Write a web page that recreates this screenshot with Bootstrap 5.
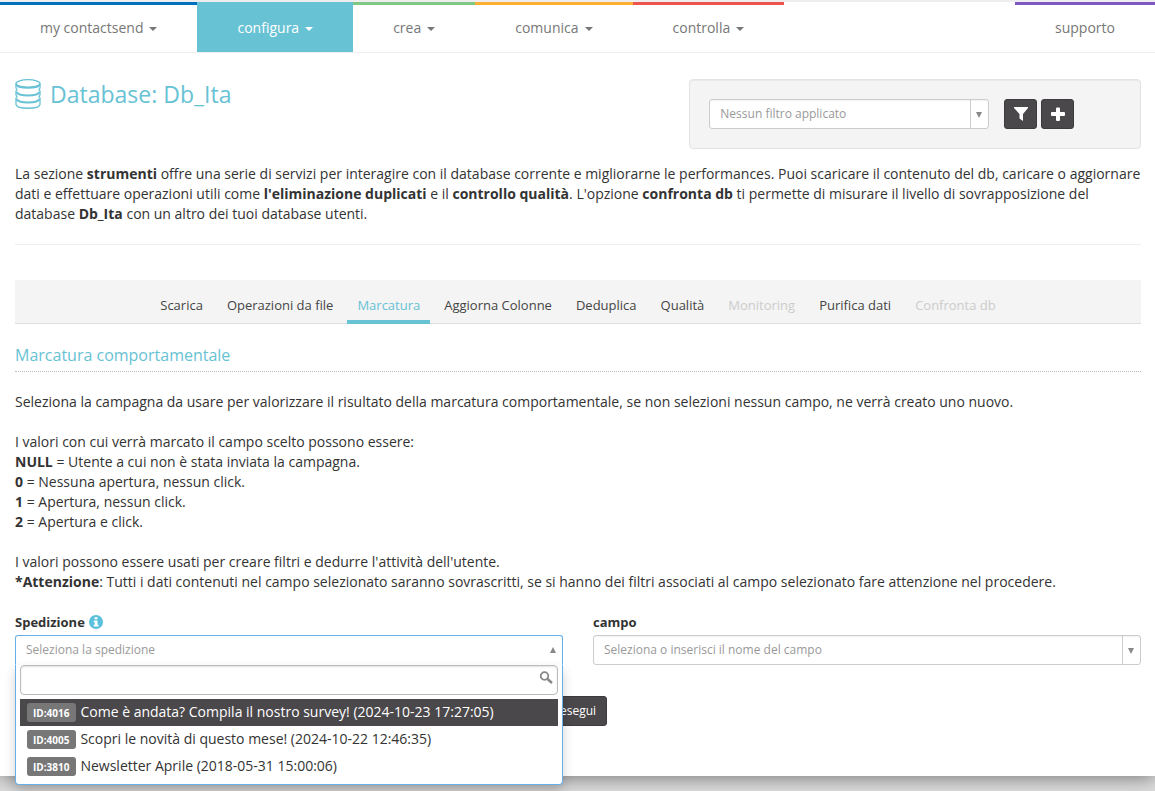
<!DOCTYPE html>
<html lang="it">
<head>
<meta charset="utf-8">
<meta name="viewport" content="width=device-width, initial-scale=1">
<title>Database: Db_Ita</title>
<link href="https://cdn.jsdelivr.net/npm/bootstrap@5.3.0/dist/css/bootstrap.min.css" rel="stylesheet">
<style>
  :root { --brand: #67c2d4; --ink: #4a484b; }
  body { font: 14px/20px "Open Sans", sans-serif; color: #333; background: #ddd; }
  .sheet { background: #fff; border-top: 2px solid #eee; padding-bottom: 50px; box-shadow: 0 0 20px rgba(0,0,0,.55); }

  .mainbar { border-bottom: 1px solid #eee; }
  .mainbar .nav-link { border-top: 3px solid var(--line); border-radius: 0; padding: 13px 40px 14px; color: #777; }
  .mainbar .nav-link.active { background: var(--brand); color: #fff; }
  .mainbar .dropdown-toggle::after { border-width: 4px 4px 0; margin-left: 6px; vertical-align: 2px; }
  .line-blue { --line: #0072bc; }
  .line-aqua { --line: var(--brand); }
  .line-green { --line: #81c784; }
  .line-yellow { --line: #fbb034; }
  .line-red { --line: #ef5350; }
  .line-violet { --line: #7e57c2; }

  .sheet-body { padding: 26px 14px 0 15px; }
  .sheet-body .row { --bs-gutter-x: 30px; }
  .page-title { font-size: 23px; line-height: 30px; color: var(--brand); gap: 9px; }
  .page-head { margin-bottom: 15px; }
  .intro { margin: 0 -4px 0 0; }
  .filter-well { background: #f4f4f4; border: 1px solid #e3e3e3; border-radius: 4px; padding: 19px; box-shadow: inset 0 1px 1px rgba(0,0,0,.05); }
  .filter-choice { width: 68%; margin-right: 15px; }

  .choice { height: 30px; font-size: 12px; line-height: 18px; color: #999; padding: 5px 28px 5px 10px; border: 1px solid #ccc; border-radius: 3px;
    background: #fff url("data:image/svg+xml,%3Csvg xmlns='http://www.w3.org/2000/svg' width='18' height='28'%3E%3Cpath d='M0 0h1v28H0z' fill='%23ccc'/%3E%3Cpath d='M6 12h6l-3 6z' fill='%23888'/%3E%3C/svg%3E") no-repeat right center / 18px 28px;
    box-shadow: inset 0 1px 1px rgba(0,0,0,.05); }
  .choice-open { border-color: #66afe9; border-bottom-color: #fff; border-radius: 3px 3px 0 0; box-shadow: none;
    background-image: url("data:image/svg+xml,%3Csvg xmlns='http://www.w3.org/2000/svg' width='18' height='28'%3E%3Cpath d='M6 17h6l-3 -6z' fill='%23888'/%3E%3C/svg%3E"); }
  .btn-ink { --bs-btn-bg: var(--ink); --bs-btn-color: #fff; --bs-btn-border-color: #3d3b3e; --bs-btn-hover-bg: #3d3b3e; --bs-btn-hover-color: #fff;
    --bs-btn-border-radius: 3px; --bs-btn-font-size: 12px; --bs-btn-line-height: 18px; --bs-btn-padding-y: 5px; --bs-btn-padding-x: 10px; line-height: 18px; }
  .btn-glyph { width: 33px; height: 30px; --bs-btn-padding-x: 0px; --bs-btn-padding-y: 0px; }

  .rule { height: 1px; background: #eee; margin: 20px 0 35px; }
  .toolbar-tabs { background: #f4f4f4; border-bottom: 1px solid #ddd; padding-top: 10px; gap: 4px; font-size: 13px; }
  .toolbar-tabs .nav-link { color: #444; padding: 5px 10px; border-bottom: 4px solid transparent; margin-bottom: -1px; }
  .toolbar-tabs .nav-link.active { color: var(--brand); border-color: var(--brand); }
  .toolbar-tabs .nav-link.disabled { color: #ccc; }
  .section-title { font-size: 16px; line-height: 20px; color: var(--brand); border-bottom: 1px dotted #bbb; padding: 21px 0 6px; margin-bottom: 20px; }
  .field-label { font-size: 13px; font-weight: 700; margin-bottom: 3px; }

  .choice-panel { top: 100%; z-index: 5; background: #fff; border: 1px solid #66afe9; border-top: 0; border-radius: 0 0 4px 4px; padding: 0 4px 4px; box-shadow: 0 6px 12px rgba(0,0,0,.18); }
  .search-box { height: 30px; font-size: 12px; border: 1px solid #bbb; border-radius: 4px; padding: 4px 28px 4px 6px; margin-bottom: 4px; box-shadow: inset 0 1px 2px rgba(0,0,0,.12); }
  .search-glyph { top: 6px; right: 5px; }
  .result { padding: 3px 7px 4px; display: flex; align-items: center; gap: 4px; }
  .result.current { background: var(--ink); color: #fff; }
  .id-tag { background: #777; color: #fff; font-size: 10px; font-weight: 700; line-height: 12px; padding: 4px 7px 3px 6px; border-radius: 3px; }
  .submit-row { margin-top: 31px; }
</style>
</head>
<body class="min-vh-100">
<div class="sheet">
  <nav class="mainbar nav">
    <a class="nav-link dropdown-toggle line-blue" href="#">my contactsend</a>
    <a class="nav-link dropdown-toggle active line-aqua" href="#">configura</a>
    <a class="nav-link dropdown-toggle line-green" href="#">crea</a>
    <a class="nav-link dropdown-toggle line-yellow" href="#">comunica</a>
    <a class="nav-link dropdown-toggle line-red" href="#">controlla</a>
    <a class="nav-link line-violet ms-auto" href="#">supporto</a>
  </nav>

  <main class="sheet-body">
    <div class="row page-head">
      <div class="col-7">
        <h1 class="page-title d-flex align-items-center fw-normal m-0">
          <svg width="26" height="30" viewBox="0 0 26 30" fill="none" stroke="#67c2d4" stroke-width="1.3" aria-hidden="true">
            <ellipse cx="13" cy="4.500" rx="12" ry="3.800"/>
            <path d="M1 4.500V9l1 1.500L1 12v4l1 1.500L1 19v6.500c1 5 23 5 24 0V19l-1-1.500 1-1.500v-4l-1-1.500L25 9V4.500"/>
            <path d="M1.500 6c2 3.600 21 3.600 23 0M1.500 13c2 4.600 21 4.600 23 0M1.500 20c2 4.600 21 4.600 23 0" stroke-width="2"/>
          </svg>
          Database: Db_Ita
        </h1>
      </div>
      <div class="col-5">
        <form class="filter-well d-flex">
          <select class="form-select choice filter-choice" aria-label="Filtro"><option>Nessun filtro applicato</option></select>
          <button type="button" class="btn btn-ink btn-glyph me-1 d-flex align-items-center justify-content-center" aria-label="Filtra">
            <svg width="14" height="14" viewBox="0 0 14 14" fill="#fff"><path d="M0 0h14v1L9 7v7L5.500 11.500V7L0 1z"/></svg>
          </button>
          <button type="button" class="btn btn-ink btn-glyph d-flex align-items-center justify-content-center" aria-label="Aggiungi">
            <svg width="14" height="14" viewBox="0 0 14 14" fill="#fff"><path d="M5 1.500a1 1 0 0 1 1-1h2a1 1 0 0 1 1 1V5h4a1 1 0 0 1 1 1v2a1 1 0 0 1-1 1H9v4a1 1 0 0 1-1 1H6a1 1 0 0 1-1-1V9H1a1 1 0 0 1-1-1V6a1 1 0 0 1 1-1h4z"/></svg>
          </button>
        </form>
      </div>
    </div>

    <p class="intro">La sezione <b>strumenti</b> offre una serie di servizi per interagire con il database corrente e migliorarne le performances. Puoi scaricare il contenuto del db, caricare o aggiornare dati e effettuare operazioni utili come <b>l'eliminazione duplicati</b> e il <b>controllo qualità</b>. L'opzione <b>confronta db</b> ti permette di misurare il livello di sovrapposizione del database <b>Db_Ita</b> con un altro dei tuoi database utenti.</p>
    <div class="rule"></div>

    <nav class="toolbar-tabs nav justify-content-center">
      <a class="nav-link" href="#">Scarica</a>
      <a class="nav-link" href="#">Operazioni da file</a>
      <a class="nav-link active" href="#">Marcatura</a>
      <a class="nav-link" href="#">Aggiorna Colonne</a>
      <a class="nav-link" href="#">Deduplica</a>
      <a class="nav-link" href="#">Qualità</a>
      <a class="nav-link disabled" href="#">Monitoring</a>
      <a class="nav-link" href="#">Purifica dati</a>
      <a class="nav-link disabled" href="#">Confronta db</a>
    </nav>

    <h2 class="section-title fw-normal">Marcatura comportamentale</h2>
    <p>Seleziona la campagna da usare per valorizzare il risultato della marcatura comportamentale, se non selezioni nessun campo, ne verrà creato uno nuovo.<br><br>
      I valori con cui verrà marcato il campo scelto possono essere:<br>
      <b>NULL</b> = Utente a cui non è stata inviata la campagna.<br>
      <b>0</b> = Nessuna apertura, nessun click.<br>
      <b>1</b> = Apertura, nessun click.<br>
      <b>2</b> = Apertura e click.<br><br>
      I valori possono essere usati per creare filtri e dedurre l'attività dell'utente.<br>
      <b>*Attenzione</b>: Tutti i dati contenuti nel campo selezionato saranno sovrascritti, se si hanno dei filtri associati al campo selezionato fare attenzione nel procedere.</p>

    <form class="pt-1">
      <div class="row">
        <div class="col-6">
          <label class="field-label d-flex align-items-center gap-1" for="spedizione">Spedizione
            <svg width="14" height="14" viewBox="0 0 14 14" aria-hidden="true"><circle cx="7" cy="7" r="7" fill="#5bc0de"/><path d="M5.500 2.200h3v2h-3zM4.800 5.500h3.700v4.300h1v1.700H4.700V9.800h1V7.200h-.9z" fill="#fff"/></svg>
          </label>
          <div class="position-relative">
            <select id="spedizione" class="form-select choice choice-open"><option>Seleziona la spedizione</option></select>
            <div class="choice-panel position-absolute start-0 end-0">
              <div class="position-relative">
                <input type="search" class="form-control search-box" aria-label="Cerca spedizione">
                <svg class="search-glyph position-absolute" width="14" height="14" viewBox="0 0 14 14" fill="none" stroke="#888" aria-hidden="true"><circle cx="5.500" cy="5" r="3.800" stroke-width="1.800"/><path d="M8.500 8L13 12" stroke-width="2.400"/></svg>
              </div>
              <ul class="list-unstyled m-0">
                <li class="result current"><span class="id-tag">ID:4016</span>Come è andata? Compila il nostro survey! (2024-10-23 17:27:05)</li>
                <li class="result"><span class="id-tag">ID:4005</span>Scopri le novità di questo mese! (2024-10-22 12:46:35)</li>
                <li class="result"><span class="id-tag">ID:3810</span>Newsletter Aprile (2018-05-31 15:00:06)</li>
              </ul>
            </div>
          </div>
        </div>
        <div class="col-6">
          <label class="field-label d-block" for="campo">campo</label>
          <select id="campo" class="form-select choice"><option>Seleziona o inserisci il nome del campo</option></select>
        </div>
      </div>
      <div class="submit-row text-center"><button type="submit" class="btn btn-ink">esegui</button></div>
    </form>
  </main>
</div>
<script src="https://cdn.jsdelivr.net/npm/bootstrap@5.3.0/dist/js/bootstrap.bundle.min.js"></script>
</body>
</html>
